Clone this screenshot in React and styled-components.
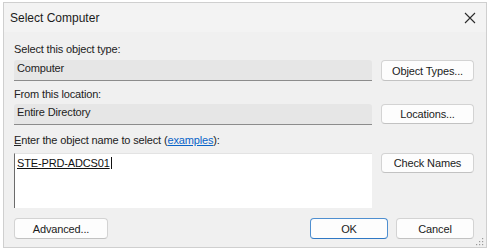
import React from "react";
import styled, { createGlobalStyle } from "styled-components";

const Global = createGlobalStyle`
  body {
    margin: 0;
    background: #ffffff;
    font-family: "Liberation Sans", Arial, sans-serif;
  }
`;

const Page = styled.div`
  width: 491px;
  height: 252px;
  padding: 2px 4px 4px 3px;
  box-sizing: border-box;
`;

const Dialog = styled.div`
  position: relative;
  width: 484px;
  height: 246px;
  box-sizing: border-box;
  border: 1px solid #cfcfcf;
  background: #f0f0f0;
  display: flex;
  flex-direction: column;
`;

const TitleBar = styled.div`
  height: 29px;
  background: #f3f3f3;
  display: flex;
  align-items: center;
  justify-content: space-between;
  padding: 0 9px 0 6px;
  font-size: 12px;
  color: #1b1b1b;
`;

const CloseBtn = styled.div`
  width: 14px;
  height: 14px;
  display: flex;
  align-items: center;
  justify-content: center;
`;

const Body = styled.div`
  padding: 10px 12px 0 10px;
  display: grid;
  grid-template-columns: 358px 93px;
  column-gap: 9px;
  align-items: start;
`;

const Label = styled.div`
  grid-column: 1 / span 2;
  font-size: 11px;
  line-height: 14px;
  color: #222;
  letter-spacing: -0.15px;
  margin-top: ${(p) => p.$top || 0}px;
  margin-bottom: ${(p) => p.$bottom || 4}px;
`;

const Field = styled.div`
  height: 21px;
  box-sizing: border-box;
  background: #e6e6e6;
  border-radius: 3px 3px 0 0;
  border-bottom: 1px solid #8c8c8c;
  font-size: 11px;
  color: #222;
  padding: 2px 3px;
  letter-spacing: -0.15px;
`;

const Button = styled.button`
  height: ${(p) => (p.$short ? 20 : 21)}px;
  box-sizing: border-box;
  background: #fdfdfd;
  border: 1px solid ${(p) => (p.$primary ? "#4f8fd0" : "#d3d3d3")};
  border-bottom-color: ${(p) => (p.$primary ? "#2f78c4" : "#c2c2c2")};
  border-radius: 4px;
  font-family: inherit;
  font-size: 11px;
  color: #1b1b1b;
  padding: 0;
  letter-spacing: -0.15px;
  width: ${(p) => p.$w || 93}px;
`;

const NameBox = styled.div`
  height: 55px;
  box-sizing: border-box;
  background: #ffffff;
  border-left: 1px solid #6b6b6b;
  border-top: 1px solid #e3e3e3;
  padding: 3px 2px;
  font-size: 11px;
  color: #111;
`;

const Resolved = styled.span`
  text-decoration: underline;
  border-right: 1px solid #111;
  padding-right: 1px;
  letter-spacing: -0.15px;
`;

const Link = styled.span`
  color: #0a64c8;
  text-decoration: underline;
`;

const Footer = styled.div`
  display: flex;
  align-items: center;
  padding: 10px 12px 0 10px;
  gap: 8px;
`;

const Spacer = styled.div`
  flex: 1;
`;

const Grip = styled.svg`
  position: absolute;
  right: 2px;
  bottom: 1px;
`;

export default function App() {
  return (
    <>
      <Global />
      <Page>
        <Dialog>
          <TitleBar>
            <span>Select Computer</span>
            <CloseBtn>
              <svg width="12" height="12" viewBox="0 0 12 12">
                <path d="M1 1L11 11M11 1L1 11" stroke="#2b2b2b" strokeWidth="1.1" />
              </svg>
            </CloseBtn>
          </TitleBar>
          <Body>
            <Label>Select this object type:</Label>
            <Field>Computer</Field>
            <Button>Object Types...</Button>
            <Label $top={6} $bottom={3}>From this location:</Label>
            <Field>Entire Directory</Field>
            <Button $short>Locations...</Button>
            <Label $top={8} $bottom={6}>
              <u>E</u>nter the object name to select (<Link>examples</Link>):
            </Label>
            <NameBox>
              <Resolved>STE-PRD-ADCS01</Resolved>
            </NameBox>
            <Button $short>Check Names</Button>
          </Body>
          <Footer>
            <Button $w={94}>Advanced...</Button>
            <Spacer />
            <Button $primary $w={78}>OK</Button>
            <Button $w={78}>Cancel</Button>
          </Footer>
          <Grip width="8" height="8" viewBox="0 0 8 8">
            <rect x="6" y="0" width="1.2" height="1.2" fill="#9a9a9a" />
            <rect x="3" y="3" width="1.2" height="1.2" fill="#9a9a9a" />
            <rect x="6" y="3" width="1.2" height="1.2" fill="#9a9a9a" />
            <rect x="0" y="6" width="1.2" height="1.2" fill="#9a9a9a" />
            <rect x="3" y="6" width="1.2" height="1.2" fill="#9a9a9a" />
            <rect x="6" y="6" width="1.2" height="1.2" fill="#9a9a9a" />
          </Grip>
        </Dialog>
      </Page>
    </>
  );
}
